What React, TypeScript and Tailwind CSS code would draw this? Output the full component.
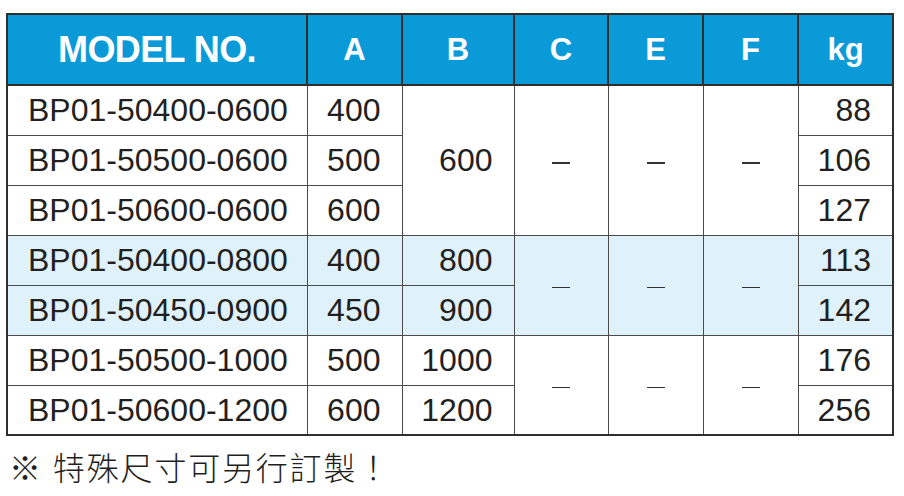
import React from 'react';

type Row = { model: string; a: string; b?: string; bSpan?: number; dash?: number; kg: string; tint?: boolean };

// rowSpan groups follow the printed spec sheet
const rows: Row[] = [
  { model: 'BP01-50400-0600', a: '400', b: '600', bSpan: 3, dash: 3, kg: '88' },
  { model: 'BP01-50500-0600', a: '500', kg: '106' },
  { model: 'BP01-50600-0600', a: '600', kg: '127' },
  { model: 'BP01-50400-0800', a: '400', b: '800', bSpan: 1, dash: 2, kg: '113', tint: true },
  { model: 'BP01-50450-0900', a: '450', b: '900', bSpan: 1, kg: '142', tint: true },
  { model: 'BP01-50500-1000', a: '500', b: '1000', bSpan: 1, dash: 2, kg: '176' },
  { model: 'BP01-50600-1200', a: '600', b: '1200', bSpan: 1, kg: '256' },
];

const cell = 'border-[1.5px] border-[#4a4a4a] h-[50px] p-0 align-middle';
const num = `${cell} text-right pr-[21px]`;
const dashCell = `${cell} text-center`;

const Dash = () => <span className="inline-block w-[18px] h-[1.5px] bg-[#333] align-middle" />;

export default function App() {
  return (
    <div className="w-[904px] h-[496px] bg-white pl-[6px] pt-[13px] text-[#231f20]" style={{ fontFamily: '"Liberation Sans", Arial, sans-serif' }}>
      <table className="table-fixed border-collapse w-[886px] border-2 border-[#2f2f2f] text-[32px] leading-none">
        <colgroup>
          <col className="w-[300px]" />
          <col className="w-[95px]" />
          <col className="w-[112px]" />
          <col className="w-[94px]" />
          <col className="w-[95px]" />
          <col className="w-[95px]" />
          <col className="w-[95px]" />
        </colgroup>
        <thead>
          <tr className="bg-[#0b9ad8] text-white font-bold h-[71px]">
            <th className="border-2 border-[#2f2f2f] text-[36px] tracking-[-0.6px] text-center font-bold">MODEL NO.</th>
            {['A', 'B', 'C', 'E', 'F', 'kg'].map((h) => (
              <th key={h} className="border-2 border-[#2f2f2f] text-[31px] text-center font-bold">{h}</th>
            ))}
          </tr>
        </thead>
        <tbody>
          {rows.map((r) => (
            <tr key={r.model} className={r.tint ? 'bg-[#dff1fa]' : 'bg-white'}>
              <td className={`${cell} text-left pl-[20px]`}>{r.model}</td>
              <td className={num}>{r.a}</td>
              {r.b && <td rowSpan={r.bSpan} className={num}>{r.b}</td>}
              {r.dash && (
                <>
                  <td rowSpan={r.dash} className={dashCell}><Dash /></td>
                  <td rowSpan={r.dash} className={dashCell}><Dash /></td>
                  <td rowSpan={r.dash} className={dashCell}><Dash /></td>
                </>
              )}
              <td className={num}>{r.kg}</td>
            </tr>
          ))}
        </tbody>
      </table>
      <p className="mt-[14px] ml-[3px] flex items-center text-[32px] leading-none font-light text-[#231f20]" style={{ fontFamily: '"Noto Sans CJK TC", "Noto Sans CJK SC", sans-serif' }}>
        <span>※</span>
        <span className="ml-[12px] tracking-[1.8px]">特殊尺寸可另行訂製！</span>
      </p>
    </div>
  );
}
